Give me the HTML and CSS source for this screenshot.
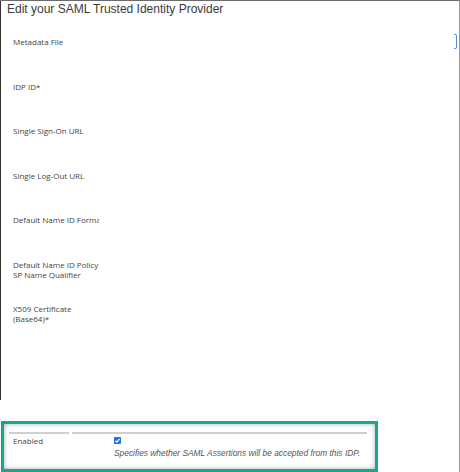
FILE: index.html
```html
<!DOCTYPE html>
<html>
<head>
<meta charset="utf-8">
<link rel="stylesheet" href="styles.css">
</head>
<body>
<div class="frame">
  <div class="panel">
    <h1 class="title">Edit your SAML Trusted Identity Provider</h1>
    <div class="form">
      <div class="row">
        <div class="label">Metadata File</div>
        <div class="field-edge"></div>
      </div>
      <div class="row"><div class="label">IDP ID*</div></div>
      <div class="row"><div class="label">Single Sign-On URL</div></div>
      <div class="row"><div class="label">Single Log-Out URL</div></div>
      <div class="row"><div class="label">Default Name ID Format</div></div>
      <div class="row"><div class="label">Default Name ID Policy<br>SP Name Qualifier</div></div>
      <div class="row"><div class="label">X509 Certificate<br>(Base64)*</div></div>
    </div>
  </div>
  <div class="highlight">
    <div class="table">
      <div class="head head-label"></div>
      <div class="head head-value"></div>
      <div class="cell-label">Enabled</div>
      <div class="cell-value">
        <span class="check"><svg viewBox="0 0 7 7" width="7" height="7"><path d="M1.5 3.8 L2.9 5.1 L5.6 1.8" fill="none" stroke="#fff" stroke-width="1.2"/></svg></span>
        <p class="hint">Specifies whether SAML Assertions will be accepted from this IDP.</p>
      </div>
    </div>
  </div>
</div>
</body>
</html>
```
FILE: styles.css
```css
* { box-sizing: border-box; }
html, body { margin: 0; padding: 0; background: #fff; }
body { font-family: "Liberation Sans", Arial, sans-serif; }

.frame {
  width: 460px;
  height: 472px;
  border-top: 1px solid #6a6a6a;
  border-right: 1px solid #9a9a9a;
  overflow: hidden;
}

.panel {
  height: 399px;
  border-left: 1px solid #333;
  padding-right: 1px;
}

.title {
  margin: 0;
  padding: 1px 0 0 6px;
  font-weight: normal;
  font-size: 12px;
  line-height: 15px;
  color: #3a3a3a;
}

.form {
  margin-top: 20px;
  display: grid;
  grid-auto-rows: 44.5px;
}

.row {
  display: flex;
  align-items: flex-start;
  padding-left: 12px;
}

.label {
  width: 86px;
  overflow: hidden;
  white-space: nowrap;
  font-family: "Open Sans", sans-serif;
  font-size: 8px;
  line-height: 10px;
  color: #444;
}

.field-edge {
  margin-left: auto;
  margin-right: 1px;
  margin-top: -3px;
  width: 3px;
  height: 15px;
  border: 1px solid #4b8fd8;
  border-left: none;
  border-radius: 0 2px 2px 0;
}

.highlight {
  margin: 21px 0 0 1px;
  width: 377px;
  height: 51px;
  border: 3px solid #13a98a;
  box-shadow: inset 0 0 4px rgba(0,0,0,0.35);
  padding: 8px 8px 0 5px;
}

.table {
  display: grid;
  grid-template-columns: 60px 295px;
  column-gap: 3px;
}

.head {
  height: 2px;
  background: #cfcfcf;
}

.cell-label {
  padding: 2px 0 0 4px;
  font-family: "Open Sans", sans-serif;
  font-size: 8px;
  line-height: 10px;
  color: #444;
}

.cell-value {
  padding: 3px 0 0 42px;
}

.check {
  display: block;
  width: 7px;
  height: 7px;
  border-radius: 1px;
  background: #1a73e8;
}

.check svg { display: block; }

.hint {
  margin: 4px 0 0;
  font-style: italic;
  font-size: 8.4px;
  line-height: 10px;
  color: #555;
  white-space: nowrap;
}
```
